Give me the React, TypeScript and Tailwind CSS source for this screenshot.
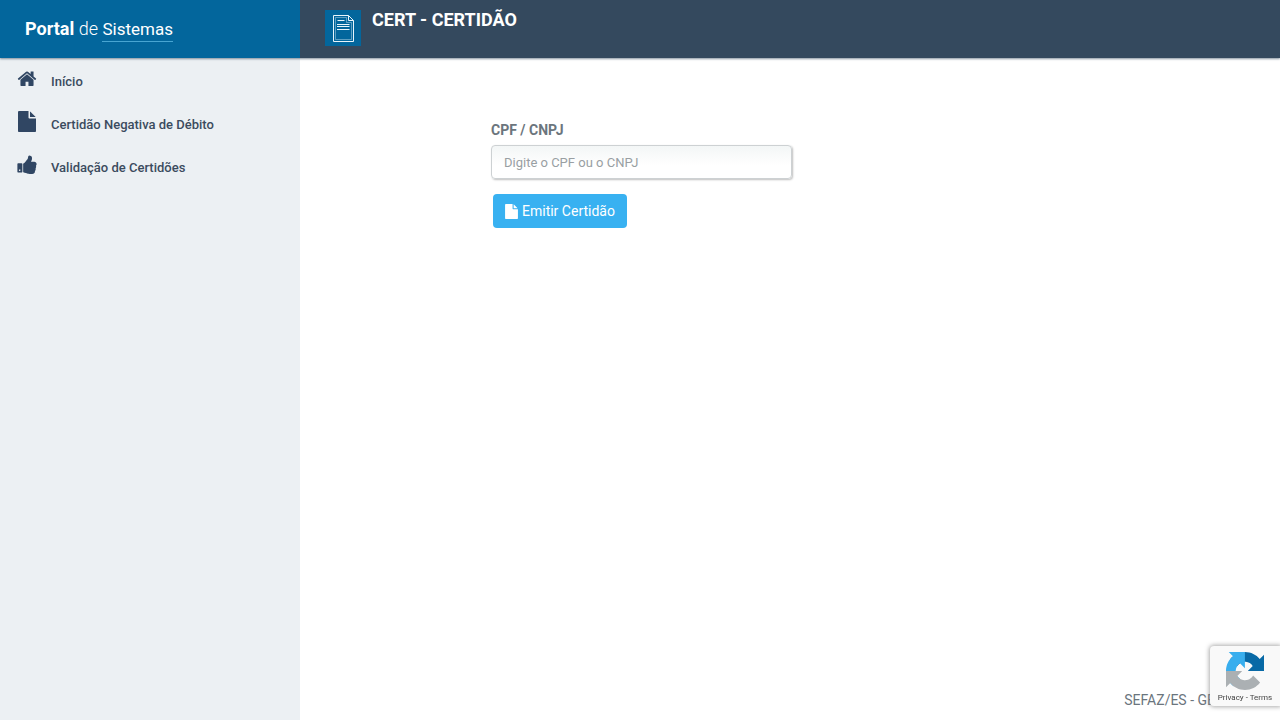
import type { ReactNode } from "react";

const FILE_PATH =
  "M1152 512v-472q22 14 36 28l408 408q14 14 28 36h-472zM1024 544q0 40 28 68t68 28h544v1056q0 40-28 68t-68 28h-1344q-40 0-68-28t-28-68v-1600q0-40 28-68t68-28h800v544z";

function HomeIcon() {
  return (
    <svg viewBox="64 128 1664 1408" className="h-4 w-5" fill="currentColor" aria-hidden="true">
      <path d="M1472 992v480q0 26-19 45t-45 19h-384v-384h-256v384h-384q-26 0-45-19t-19-45v-480q0-1 .5-3t.5-3l575-474 575 474q1 2 1 6zm223-69l-62 74q-8 9-21 11h-3q-13 0-21-7l-692-577-692 577q-12 8-24 7-13-2-21-11l-62-74q-8-10-7-23.5t11-21.5l719-599q32-26 76-26t76 26l244 204v-195q0-14 9-23t23-9h192q14 0 23 9t9 23v408l219 182q10 8 11 21.5t-7 23.5z" />
    </svg>
  );
}

function FileIcon({ className }: { className: string }) {
  return (
    <svg viewBox="128 0 1536 1792" className={className} fill="currentColor" aria-hidden="true">
      <path d={FILE_PATH} />
    </svg>
  );
}

function ThumbIcon() {
  return (
    <svg viewBox="64 0 1600 1664" className="h-5 w-5" fill="currentColor" aria-hidden="true">
      <path d="M320 1344q0-26-19-45t-45-19q-27 0-45.5 19t-18.5 45q0 27 18.5 45.5t45.5 18.5q26 0 45-18.5t19-45.5zm160-512v640q0 26-19 45t-45 19h-288q-26 0-45-19t-19-45v-640q0-26 19-45t45-19h288q26 0 45 19t19 45zm1184 0q0 86-55 149 15 44 15 76 3 76-43 137 17 56 0 117-15 57-54 94 9 112-49 181-64 76-197 78h-129q-66 0-144-15.5t-121.5-29-120.5-39.5q-123-43-158-44-26-1-45-19.5t-19-44.5v-641q0-25 18-43.5t43-20.5q24-2 76-59t101-121q68-87 101-120 18-18 31-48t17.5-48.5 13.5-60.5q7-39 12.5-61t19.5-52 34-50q19-19 45-19 46 0 82.5 10.5t60 26 40 40.5 24 45 12 50 5 45 .5 39q0 38-9.5 76t-19 60-27.5 56q-3 6-10 18t-11 22-8 24h277q78 0 135 57t57 135z" />
    </svg>
  );
}

function DocumentLogo() {
  return (
    <svg viewBox="0 0 36 36" className="h-9 w-9 bg-[#03669c]" fill="none" stroke="#e9f5fb" aria-hidden="true">
      <path d="M8.500 5.500h15l5 5v21h-20z" />
      <path d="M10.500 7.500h11v5h5v17h-16z" strokeWidth=".4" />
      <path d="M23.500 5.500v5h5" />
      <path d="M12.500 10.500h7M12 14.500h12.500M12 16.500h12.500M12 19.500h12.500" />
    </svg>
  );
}

function RecaptchaLogo() {
  return (
    <svg viewBox="0 0 64 64" className="h-[38px] w-[38px]" aria-hidden="true">
      <path fill="#0869a6" d="M64 31.955l-.033-1.37V4.687l-7.16 7.16C50.948 4.674 42.033.093 32.05.093c-10.4 0-19.622 4.96-25.458 12.64l11.736 11.86a15.55 15.55 0 0 1 4.754-5.334c2.05-1.6 4.952-2.906 8.968-2.906.485 0 .86.057 1.135.163 4.976.393 9.288 3.14 11.828 7.124l-8.307 8.307L64 31.953" />
      <path fill="#38aeee" d="M31.862.094l-1.37.033H4.594l7.16 7.16C4.58 13.147 0 22.06 0 32.046c0 10.4 4.96 19.622 12.64 25.458L24.5 45.768a15.55 15.55 0 0 1-5.334-4.754c-1.6-2.05-2.906-4.952-2.906-8.968 0-.485.057-.86.163-1.135.393-4.976 3.14-9.288 7.124-11.828l8.307 8.307L31.86.095" />
      <path fill="#abb0b3" d="M.001 32.045l.033 1.37v25.898l7.16-7.16c5.86 7.173 14.774 11.754 24.76 11.754 10.4 0 19.622-4.96 25.458-12.64l-11.736-11.86a15.55 15.55 0 0 1-4.754 5.334c-2.05 1.6-4.952 2.906-8.968 2.906-.485 0-.86-.057-1.135-.163-4.976-.393-9.288-3.14-11.828-7.124l8.307-8.307c-10.522.04-22.4.066-27.295-.005" />
    </svg>
  );
}

function MenuItem({ icon, children }: { icon: ReactNode; children: ReactNode }) {
  return (
    <li>
      <a href="#" className="flex h-[43px] items-center gap-[14px] px-[17px]">
        <span className="flex w-5 justify-center pb-[7px] text-[#304663]">{icon}</span>
        <span>{children}</span>
      </a>
    </li>
  );
}

export default function App() {
  return (
    <div className="flex min-h-screen flex-col bg-white font-['Roboto',sans-serif] text-[#6b757d]">
      <header className="z-10 flex h-[58px] bg-[#34495e] text-white shadow-[0_1px_2px_rgba(52,73,94,0.6)]">
        <div className="flex w-[300px] shrink-0 items-center bg-[#03669c] pl-[25px] text-lg leading-6">
          <a href="#">
            <strong className="font-bold">Portal</strong>{" "}
            <span className="font-light">de</span>{" "}
            <span className="inline-block border-b border-[#48a5d2] text-[17px]">Sistemas</span>
          </a>
        </div>
        <div className="flex grow items-start gap-[11px] pt-[10px] pl-[25px]">
          <DocumentLogo />
          <h1 className="text-lg leading-5 font-bold">CERT - CERTIDÃO</h1>
        </div>
      </header>

      <div className="flex grow">
        <nav className="w-[300px] shrink-0 bg-[#ecf0f3] pt-[2px] text-[13px] font-medium text-[#3b4b5e]">
          <ul>
            <MenuItem icon={<HomeIcon />}>Início</MenuItem>
            <MenuItem icon={<FileIcon className="h-[21px] w-[18px]" />}>Certidão Negativa de Débito</MenuItem>
            <MenuItem icon={<ThumbIcon />}>Validação de Certidões</MenuItem>
          </ul>
        </nav>

        <div className="flex grow flex-col">
          <main className="grow pt-[62px] pl-[191px]">
            <form className="flex w-[301px] flex-col items-start" onSubmit={(event) => event.preventDefault()}>
              <label htmlFor="document" className="pb-[5px] text-sm leading-5 font-bold">
                CPF / CNPJ
              </label>
              <input
                id="document"
                type="text"
                placeholder="Digite o CPF ou o CNPJ"
                className="h-[34px] w-full rounded border border-[#cdd1d3] bg-linear-to-b from-[#f3f6f6] to-white to-60% px-3 text-[13px] shadow-[1px_1px_2px_rgba(0,0,0,0.25)] outline-none placeholder:text-[#999fa3]"
              />
              <button
                type="submit"
                className="mt-[15px] ml-[2px] flex h-[34px] items-center gap-1 rounded bg-[#38b1f1] px-3 text-sm text-white"
              >
                <FileIcon className="h-[15px] w-[13px]" />
                Emitir Certidão
              </button>
            </form>
          </main>
          <footer className="flex justify-end pr-[65px] pb-[10px] text-sm leading-5">SEFAZ/ES - GE</footer>
        </div>
      </div>

      <aside className="fixed right-0 bottom-[14px] z-20 flex h-[60px] w-[70px] flex-col items-center rounded-l-sm bg-[#f9f9f9] pt-[6px] shadow-[0_0_4px_1px_rgba(128,128,128,0.65)]">
        <RecaptchaLogo />
        <div className="pt-[2px] text-[8px] leading-3 whitespace-nowrap text-[#444]">
          <a href="#">Privacy</a> - <a href="#">Terms</a>
        </div>
      </aside>
    </div>
  );
}
